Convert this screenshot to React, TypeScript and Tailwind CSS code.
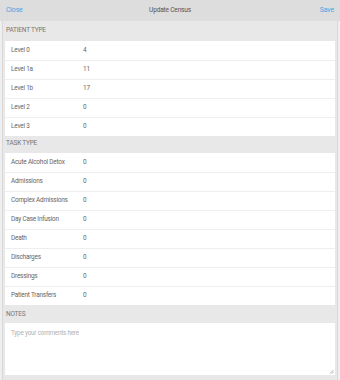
import React from "react";

const patient = [
  ["Level 0", "4"],
  ["Level 1a", "11"],
  ["Level 1b", "17"],
  ["Level 2", "0"],
  ["Level 3", "0"],
];
const tasks = [
  ["Acute Alcohol Detox", "0"],
  ["Admissions", "0"],
  ["Complex Admissions", "0"],
  ["Day Case Infusion", "0"],
  ["Death", "0"],
  ["Discharges", "0"],
  ["Dressings", "0"],
  ["Patient Transfers", "0"],
];

function Card({ rows }: { rows: string[][] }) {
  return (
    <div className="bg-white">
      {rows.map(([k, v], i) => (
        <div
          key={k}
          className={
            "flex h-[19px] items-center text-[6.4px] tracking-[-0.2px] text-[#666] " +
            (i > 0 ? "border-t border-[#eeeeee]" : "")
          }
        >
          <span className="w-[78px] pl-[6px]">{k}</span>
          <span>{v}</span>
        </div>
      ))}
    </div>
  );
}

export default function App() {
  return (
    <div
      className="w-[340px] h-[380px] flex flex-col bg-[#efefef] overflow-hidden"
      style={{ fontFamily: "Roboto, 'Liberation Sans', Arial, sans-serif" }}
    >
      <div className="h-[21px] shrink-0 bg-[#dddddd] flex items-center justify-between px-[6px] text-[7px] tracking-[-0.2px] relative">
        <span className="text-[#4aa3e6]">Close</span>
        <span className="absolute left-0 right-0 text-center text-[#555] text-[6.6px]">Update Census</span>
        <span className="text-[#4aa3e6] relative">Save</span>
      </div>
      <div className="flex-1 mx-[2px] border-x border-[#d8d8d8] bg-[#e8e8e8] px-[2px] flex flex-col tracking-[-0.2px]">
        <div className="h-[20px] flex items-end pb-[5px] pl-[1px] text-[6.5px] text-[#777]">PATIENT TYPE</div>
        <Card rows={patient} />
        <div className="h-[17px] flex items-end pb-[4px] pl-[1px] text-[6.5px] text-[#777]">TASK TYPE</div>
        <Card rows={tasks} />
        <div className="h-[18px] flex items-end pb-[3px] pl-[1px] text-[6.5px] text-[#777]">NOTES</div>
        <div className="relative h-[52px] bg-white">
          <div className="pl-[6px] pt-[6px] text-[6.3px] text-[#b0b0b0]">Type your comments here</div>
          <svg className="absolute right-[1px] bottom-[1px]" width="5" height="5" viewBox="0 0 5 5">
            <path d="M4.5 1 L1 4.5 M4.5 3 L3 4.5" stroke="#999" strokeWidth="0.8" />
          </svg>
        </div>
      </div>
    </div>
  );
}
